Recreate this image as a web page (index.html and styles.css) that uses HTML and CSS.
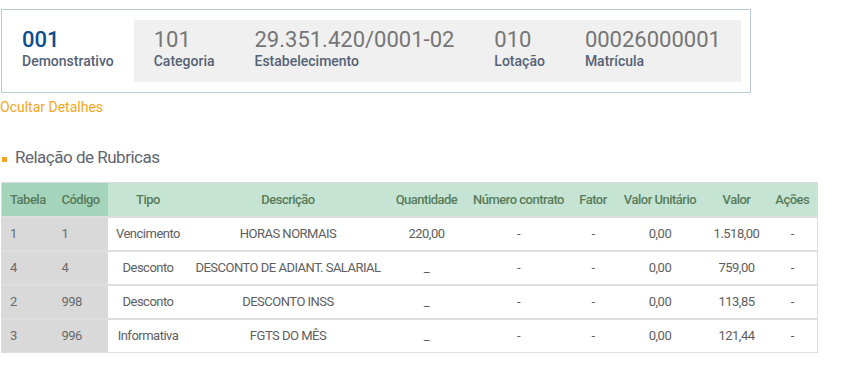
FILE: index.html
```html
<!DOCTYPE html>
<html lang="pt-BR">
<head>
<meta charset="utf-8">
<title>Rubricas</title>
<link rel="stylesheet" href="styles.css">
</head>
<body>
<div class="card">
  <div class="item">
    <div class="num num-main">001</div>
    <div class="label">Demonstrativo</div>
  </div>
  <div class="details">
    <div class="item">
      <div class="num">101</div>
      <div class="label">Categoria</div>
    </div>
    <div class="item">
      <div class="num">29.351.420/0001-02</div>
      <div class="label">Estabelecimento</div>
    </div>
    <div class="item">
      <div class="num">010</div>
      <div class="label">Lotação</div>
    </div>
    <div class="item">
      <div class="num">00026000001</div>
      <div class="label">Matrícula</div>
    </div>
  </div>
</div>
<a class="toggle">Ocultar Detalhes</a>

<h2 class="section-title"><span class="bullet"></span>Relação de Rubricas</h2>

<table class="grid">
  <colgroup>
    <col class="c-tab"><col class="c-cod"><col class="c-tipo"><col class="c-desc"><col class="c-qtd">
    <col class="c-num"><col class="c-fator"><col class="c-vu"><col class="c-valor"><col class="c-acoes">
  </colgroup>
  <thead>
    <tr>
      <th class="key">Tabela</th>
      <th class="key">Código</th>
      <th>Tipo</th>
      <th>Descrição</th>
      <th>Quantidade</th>
      <th>Número contrato</th>
      <th>Fator</th>
      <th>Valor Unitário</th>
      <th>Valor</th>
      <th>Ações</th>
    </tr>
  </thead>
  <tbody>
    <tr>
      <td class="key">1</td><td class="key">1</td><td>Vencimento</td><td>HORAS NORMAIS</td><td>220,00</td>
      <td>-</td><td>-</td><td>0,00</td><td>1.518,00</td><td>-</td>
    </tr>
    <tr>
      <td class="key">4</td><td class="key">4</td><td>Desconto</td><td>DESCONTO DE ADIANT. SALARIAL</td><td>_</td>
      <td>-</td><td>-</td><td>0,00</td><td>759,00</td><td>-</td>
    </tr>
    <tr>
      <td class="key">2</td><td class="key">998</td><td>Desconto</td><td>DESCONTO INSS</td><td>_</td>
      <td>-</td><td>-</td><td>0,00</td><td>113,85</td><td>-</td>
    </tr>
    <tr>
      <td class="key">3</td><td class="key">996</td><td>Informativa</td><td>FGTS DO MÊS</td><td>_</td>
      <td>-</td><td>-</td><td>0,00</td><td>121,44</td><td>-</td>
    </tr>
  </tbody>
</table>
</body>
</html>
```

FILE: styles.css
```css
* { box-sizing: border-box; }

body {
  margin: 0;
  padding: 9px 0 0 0;
  font-family: Roboto, "Noto Sans", sans-serif;
  background: #fff;
  color: #555;
}

.card {
  margin-left: 1px;
  width: 750px;
  height: 84px;
  border: 1px solid #b9cbd6;
  padding: 10px 9px 10px 0;
  display: flex;
}

.details {
  flex: 1;
  display: flex;
  background: #f0f0f0;
}

.item {
  padding: 7px 20px 0 20px;
}

.num {
  font-size: 22px;
  line-height: 25px;
  color: #757575;
  white-space: nowrap;
}

.num-main {
  color: #0b4d8f;
  font-weight: 500;
}

.label {
  font-size: 14px;
  line-height: 18px;
  font-weight: 500;
  color: #556274;
  white-space: nowrap;
}

.toggle {
  display: block;
  margin-top: 6px;
  font-size: 14px;
  line-height: 17px;
  color: #f5a623;
  cursor: pointer;
}

.section-title {
  margin: 31px 0 0 0;
  display: flex;
  align-items: center;
  font-size: 17px;
  line-height: 20px;
  font-weight: 400;
  letter-spacing: -0.5px;
  color: #5f6670;
}

.bullet {
  width: 5px;
  height: 5px;
  background: #f5a623;
  margin: 4px 8px 0 2px;
}

.grid {
  margin: 15px 0 0 1px;
  table-layout: fixed;
  width: 816px;
  border-collapse: collapse;
  font-size: 13px;
  letter-spacing: -0.5px;
  border: 1px solid #dcdcdc;
}

.c-tab { width: 52px; }
.c-cod { width: 54px; }
.c-tipo { width: 81px; }
.c-desc { width: 199px; }
.c-qtd { width: 78px; }
.c-num { width: 106px; }
.c-fator { width: 43px; }
.c-vu { width: 91px; }
.c-valor { width: 62px; }
.c-acoes { width: 50px; }

.grid th {
  height: 34px;
  background: #c6e4d3;
  color: #587c5a;
  font-weight: 500;
  text-align: center;
  padding: 0 4px;
  white-space: nowrap;
}

.grid th.key {
  background: #a4d4bc;
  text-align: left;
  padding-left: 8px;
}

.grid td {
  height: 34px;
  text-align: center;
  color: #5e5e5e;
  border-top: 2px solid #dedede;
  padding: 0 4px;
  white-space: nowrap;
}

.grid td.key {
  background: #d9d9d9;
  text-align: left;
  padding-left: 8px;
  color: #6a6a6a;
}
```
